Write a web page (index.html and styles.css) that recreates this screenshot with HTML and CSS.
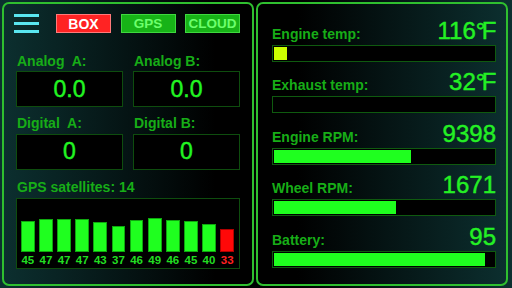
FILE: index.html
```html
<!DOCTYPE html>
<html>
<head>
<meta charset="utf-8">
<link rel="stylesheet" href="styles.css">
</head>
<body>
<div class="screen">
  <section class="panel left">
    <header class="top">
      <div class="menu"><span></span><span></span><span></span></div>
      <div class="btns">
        <span class="btn red">BOX</span>
        <span class="btn green">GPS</span>
        <span class="btn green">CLOUD</span>
      </div>
    </header>
    <div class="grid">
      <div class="cell"><div class="lbl">Analog&nbsp; A:</div><div class="val">0.0</div></div>
      <div class="cell"><div class="lbl">Analog B:</div><div class="val">0.0</div></div>
      <div class="cell"><div class="lbl">Digital&nbsp; A:</div><div class="val">0</div></div>
      <div class="cell"><div class="lbl">Digital B:</div><div class="val">0</div></div>
    </div>
    <div class="lbl sat">GPS satellites: 14</div>
    <div class="chart">
      <div class="col"><div class="bar" style="height:31px"></div><span>45</span></div>
      <div class="col"><div class="bar" style="height:32.4px"></div><span>47</span></div>
      <div class="col"><div class="bar" style="height:32.4px"></div><span>47</span></div>
      <div class="col"><div class="bar" style="height:32.4px"></div><span>47</span></div>
      <div class="col"><div class="bar" style="height:29.7px"></div><span>43</span></div>
      <div class="col"><div class="bar" style="height:25.5px"></div><span>37</span></div>
      <div class="col"><div class="bar" style="height:31.7px"></div><span>46</span></div>
      <div class="col"><div class="bar" style="height:33.8px"></div><span>49</span></div>
      <div class="col"><div class="bar" style="height:31.7px"></div><span>46</span></div>
      <div class="col"><div class="bar" style="height:31px"></div><span>45</span></div>
      <div class="col"><div class="bar" style="height:27.6px"></div><span>40</span></div>
      <div class="col weak"><div class="bar" style="height:22.8px"></div><span>33</span></div>
    </div>
  </section>
  <section class="panel right">
    <div class="row">
      <div class="head"><span class="lbl">Engine temp:</span><span class="num">116<span class="unit">°F</span></span></div>
      <div class="meter"><div class="fill warm" style="width:6%"></div></div>
    </div>
    <div class="row">
      <div class="head"><span class="lbl">Exhaust temp:</span><span class="num">32<span class="unit">°F</span></span></div>
      <div class="meter"><div class="fill" style="width:0%"></div></div>
    </div>
    <div class="row">
      <div class="head"><span class="lbl">Engine RPM:</span><span class="num">9398</span></div>
      <div class="meter"><div class="fill" style="width:62.4%"></div></div>
    </div>
    <div class="row">
      <div class="head"><span class="lbl">Wheel RPM:</span><span class="num">1671</span></div>
      <div class="meter"><div class="fill" style="width:55.3%"></div></div>
    </div>
    <div class="row">
      <div class="head"><span class="lbl">Battery:</span><span class="num">95</span></div>
      <div class="meter"><div class="fill" style="width:95.8%"></div></div>
    </div>
  </section>
</div>
</body>
</html>
```
FILE: styles.css
```css
* { box-sizing: border-box; }
html, body { margin: 0; padding: 0; }
body {
  width: 512px;
  height: 288px;
  overflow: hidden;
  font-family: "Liberation Sans", Arial, sans-serif;
  background: linear-gradient(90deg, #0c3030 0%, #000 42%, #000 58%, #0c3030 100%);
}
.screen {
  display: flex;
  gap: 2px;
  padding: 2px 4px 2px 2px;
  height: 288px;
}
.panel {
  width: 252px;
  height: 284px;
  border: 2px solid #2fbf2f;
  border-radius: 7px;
}
.left {
  padding: 10px 12px 0 12px;
  display: flex;
  flex-direction: column;
}
.top {
  display: flex;
  align-items: center;
  height: 19px;
}
.menu {
  margin-left: -2px;
  margin-right: auto;
  width: 25px;
  display: flex;
  flex-direction: column;
  gap: 5px;
}
.menu span {
  display: block;
  height: 3px;
  background: #5ae6f0;
}
.btns {
  display: flex;
  gap: 9.5px;
}
.btn {
  width: 55px;
  height: 19.5px;
  display: flex;
  align-items: center;
  justify-content: center;
  font-weight: bold;
  font-size: 14px;
  line-height: 1;
}
.red {
  background: #ff2323;
  border: 1px solid #ff7a7a;
  color: #fff;
}
.green {
  background: #17b317;
  border: 1px solid #3fd83f;
  color: #6cff6c;
  font-size: 13.5px;
}
.lbl {
  font-weight: bold;
  font-size: 14px;
  line-height: 16px;
  color: #17ad17;
  white-space: pre;
}
.grid {
  margin-top: 19.5px;
  display: grid;
  grid-template-columns: 1fr 1fr;
  column-gap: 10px;
  row-gap: 8px;
}
.cell .lbl { margin-left: 1px; }
.val {
  margin-top: 2.5px;
  height: 36px;
  border: 1px solid #0e4d0e;
  background: #000;
  display: flex;
  align-items: center;
  justify-content: center;
  font-size: 23px;
  line-height: 1;
  color: #22f522;
  -webkit-text-stroke: 0.45px #22f522;
}
.sat {
  margin-top: 9.5px;
  margin-left: 1px;
}
.chart {
  margin-top: 3px;
  height: 71px;
  border: 1px solid #0e4d0e;
  background: #000;
  display: grid;
  grid-template-columns: repeat(12, 1fr);
  column-gap: 4.4px;
  align-items: end;
  padding: 0 5px 1px 4px;
}
.col {
  display: flex;
  flex-direction: column;
  align-items: stretch;
}
.bar {
  background: #1fff1f;
  border: 1px solid #0fa80f;
}
.col span {
  margin-top: 2.5px;
  text-align: center;
  font-weight: bold;
  font-size: 11.5px;
  line-height: 13px;
  color: #22dd22;
}
.col.weak .bar {
  background: #ff0808;
  border-color: #b00000;
}
.col.weak span { color: #ff2020; }
.right {
  padding: 15.5px 10px 0 14px;
  display: flex;
  flex-direction: column;
  gap: 9.6px;
}
.head {
  height: 22px;
  display: flex;
  justify-content: space-between;
  align-items: baseline;
}
.num {
  font-size: 24px;
  line-height: 22px;
  color: #24f024;
  -webkit-text-stroke: 0.45px #24f024;
}
.unit {
  letter-spacing: -3.5px;
  padding-right: 3px;
}
.meter {
  margin-top: 3px;
  height: 17px;
  border: 1px solid #0f5a0f;
  background: #000;
  padding: 1px;
}
.fill {
  height: 100%;
  background: #1fff1f;
}
.fill.warm { background: #ccff00; }
```
